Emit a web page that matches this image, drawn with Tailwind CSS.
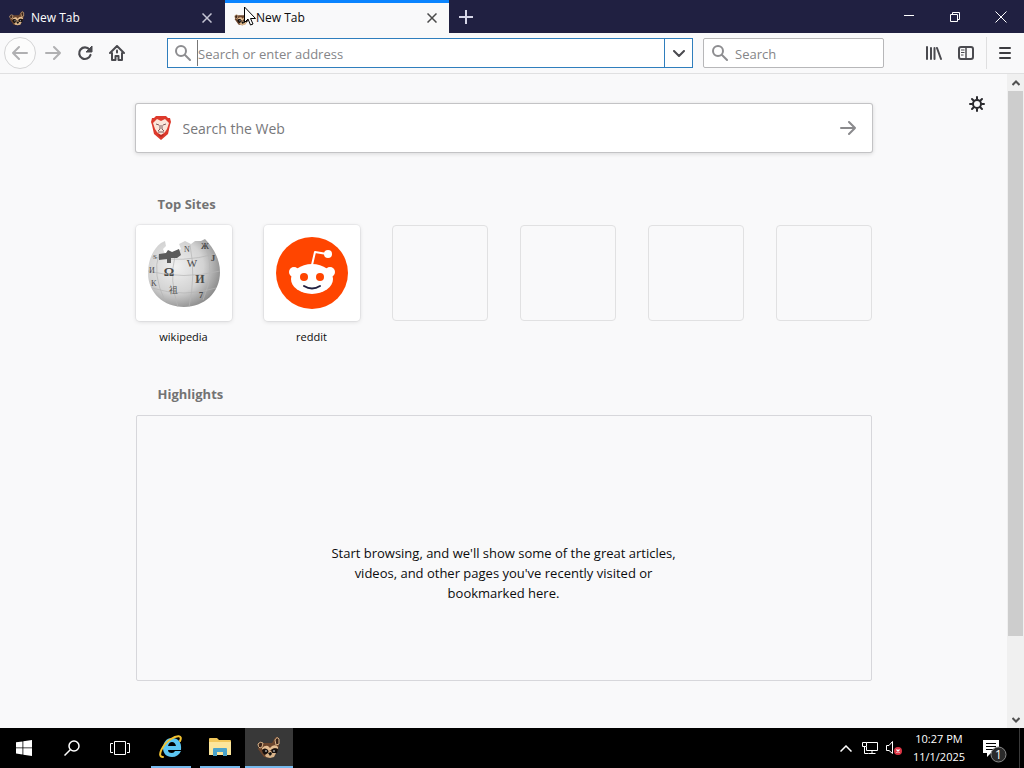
<!DOCTYPE html>
<html lang="en">
<head>
  <meta charset="UTF-8" />
  <meta name="viewport" content="width=device-width, initial-scale=1.0" />
  <title>New Tab</title>
  <script src="https://cdn.jsdelivr.net/npm/@tailwindcss/browser@4"></script>
</head>
<body class="flex min-h-screen flex-col bg-[#f9f9fa] font-['Open_Sans','Noto_Sans',sans-serif] text-xs text-[#0c0c0d]">

  <!-- Shared raccoon icon -->
  <svg class="hidden" aria-hidden="true">
    <symbol id="raccoon" viewBox="0 0 24 24">
      <path d="M3 10q1-2 4-2l8 0 3-5q3-3 4 1l0 6-1 5-3 5-5 3-6-1-3-4-3-4z" fill="#6b452d" />
      <path d="M1 9q2-3 5-1l-1 4-2 1q-2-1-2-4z" fill="#3a241a" stroke="#d9b48a" />
      <path d="M18 5q2-4 4-1v5l-3 1z" fill="#3a241a" stroke="#d9b48a" />
      <path d="M5 13q3-3 6-2l2 2 2-2q4-2 6 1v2q-4-2-7 1l-2 1-3-2q-2-1-4 1z" fill="#e3bd92" />
      <path d="M5 15q3-3 6 0l0 3-3 2q-3-2-3-5zM14 15q3-3 7-1l-1 4-4 1z" fill="#17110f" />
      <path d="M8 20l3-2 1-2h2l1 2 4 0-2 4-4 1-4-1z" fill="#d9b48a" />
      <path d="M11 18l3-1 1 2-2 2z" fill="#111" />
      <circle cx="9" cy="16" r="0.800" fill="#fff" />
      <circle cx="17" cy="16" r="0.800" fill="#fff" />
    </symbol>
  </svg>

  <!-- Tab strip -->
  <header class="relative flex h-[33px] bg-[#202041] text-white">
    <div class="flex w-[225px] items-center gap-[6px] pt-[2px] pr-3 pl-[9px]">
      <svg class="h-4 w-4"><use href="#raccoon" /></svg>
      <span class="flex-1">New Tab</span>
      <button class="grid h-4 w-3 place-items-center" aria-label="Close tab">
        <svg class="h-[10px] w-[10px]" viewBox="0 0 10 10" stroke="#c4c4d4" stroke-width="1.5"><path d="M0.5 0.5l9 9M9.5 0.5l-9 9" /></svg>
      </button>
    </div>
    <div class="flex w-[224px] items-center gap-[6px] border-t-3 border-[#0a84ff] bg-[#f9f9fa] pr-[11px] pl-[9px] text-[#0c0c0d]">
      <svg class="h-4 w-4"><use href="#raccoon" /></svg>
      <span class="flex-1">New Tab</span>
      <button class="grid h-4 w-3 place-items-center" aria-label="Close tab">
        <svg class="h-[10px] w-[10px]" viewBox="0 0 10 10" stroke="#4a4a4a" stroke-width="1.5"><path d="M0.5 0.5l9 9M9.5 0.5l-9 9" /></svg>
      </button>
    </div>
    <button class="grid w-[34px] place-items-center" aria-label="New tab">
      <svg class="h-[14px] w-[14px]" viewBox="0 0 14 14" stroke="#d5d5e6" stroke-width="2"><path d="M7 0v14M0 7h14" /></svg>
    </button>
    <div class="ml-auto flex">
      <button class="grid w-[46px] place-items-center" aria-label="Minimize">
        <svg class="h-[10px] w-[10px]" viewBox="0 0 10 10" stroke="#fff"><path d="M0 3.5h10" /></svg>
      </button>
      <button class="grid w-[46px] place-items-center" aria-label="Restore">
        <svg class="h-[10px] w-[10px]" viewBox="0 0 10 10" fill="none" stroke="#fff"><path d="M0.5 2.5h7v7h-7zM2.5 2.5v-2h7v7h-2" /></svg>
      </button>
      <button class="grid w-[46px] place-items-center" aria-label="Close window">
        <svg class="h-3 w-3" viewBox="0 0 12 12" stroke="#fff"><path d="M0.5 0.5l11 11M11.5 0.5l-11 11" /></svg>
      </button>
    </div>
    <!-- Mouse pointer -->
    <svg class="absolute top-[6px] left-[244px] z-10 h-5 w-3" viewBox="0 0 12 20" fill="#fff" stroke="#000"><path d="M0.5 1v15.500l3.500-3.500 2.500 6 2.500-1-2.500-5.500h5z" /></svg>
  </header>

  <!-- Navigation toolbar -->
  <nav class="flex h-[41px] items-center border-b border-[#e0e0e1] bg-[#f9f9fa] pl-1 text-[#4a4a4f]">
    <button class="grid h-8 w-8 place-items-center rounded-full border border-[#d4d4d5] bg-[#fcfcfc]" aria-label="Back">
      <svg class="h-4 w-4" viewBox="0 0 16 16" fill="none" stroke="#b0b0b2" stroke-width="2" stroke-linecap="round" stroke-linejoin="round"><path d="M15 8H1M7 2L1 8l6 6" /></svg>
    </button>
    <button class="grid h-8 w-[33px] place-items-center" aria-label="Forward">
      <svg class="h-4 w-4" viewBox="0 0 16 16" fill="none" stroke="#b0b0b2" stroke-width="2" stroke-linecap="round" stroke-linejoin="round"><path d="M1 8h14M9 2l6 6-6 6" /></svg>
    </button>
    <button class="grid h-8 w-8 place-items-center" aria-label="Reload">
      <svg class="h-4 w-4" viewBox="0 0 16 16"><path d="M12.500 4.500A5.800 5.800 0 1 0 13.500 10" fill="none" stroke="#4a4a4f" stroke-width="2.200" stroke-linecap="round" /><path d="M15 1v6H9z" fill="#4a4a4f" stroke="#4a4a4f" stroke-linejoin="round" /></svg>
    </button>
    <button class="grid h-8 w-8 place-items-center" aria-label="Home">
      <svg class="h-4 w-4" viewBox="0 0 16 16" fill="none" stroke="#4a4a4f" stroke-width="2" stroke-linecap="round" stroke-linejoin="round"><path d="M1 8l7-7 7 7M3 8v7h3.500v-4h3v4H13V8" /><path d="M8 5.500v2" /></svg>
    </button>
    <div class="ml-[34px] flex h-[30px] flex-1 items-center border border-[#2f7ebd] bg-white">
      <label for="address" class="grid w-[29px] place-items-center" aria-label="Address">
        <svg class="h-4 w-4" viewBox="0 0 16 16" fill="none" stroke="#8d8d90" stroke-width="2" stroke-linecap="round"><circle cx="6" cy="6" r="5" /><path d="M10 10l5 5" /></svg>
      </label>
      <input id="address" type="text" placeholder="Search or enter address" class="h-[26px] min-w-0 flex-1 border-l border-[#777] pt-[2px] text-[13px] outline-none placeholder:text-[#858588]" />
      <button class="grid h-full w-7 place-items-center border-l border-[#2f7ebd]" aria-label="Show history">
        <svg class="h-[7px] w-3" viewBox="0 0 12 7" fill="none" stroke="#4a4a4f" stroke-width="2" stroke-linecap="round" stroke-linejoin="round"><path d="M1 1l5 5 5-5" /></svg>
      </button>
    </div>
    <div class="ml-[10px] flex h-[30px] w-[181px] items-center rounded-xs border border-[#b7b7b9] bg-white">
      <label for="search" class="grid w-[31px] place-items-center" aria-label="Search">
        <svg class="h-4 w-4" viewBox="0 0 16 16" fill="none" stroke="#8d8d90" stroke-width="2" stroke-linecap="round"><circle cx="6" cy="6" r="5" /><path d="M10 10l5 5" /></svg>
      </label>
      <input id="search" type="text" placeholder="Search" class="h-[26px] min-w-0 flex-1 pt-[2px] text-[13px] outline-none placeholder:text-[#858588]" />
    </div>
    <button class="ml-[34px] grid h-8 w-8 place-items-center" aria-label="Library">
      <svg class="h-4 w-4" viewBox="0 0 16 16" fill="none" stroke="#4a4a4f" stroke-width="2" stroke-linecap="round"><path d="M1 2v12M5 3v11M8.500 3v11M11 3l4 11" /></svg>
    </button>
    <button class="grid h-8 w-8 place-items-center" aria-label="Sidebars">
      <svg class="h-4 w-4" viewBox="0 0 16 16" fill="none" stroke="#4a4a4f" stroke-width="2"><rect x="1" y="2" width="14" height="12" rx="2" /><path d="M8 2v12" stroke-width="1.500" /><path d="M3 5h3.500M3 7.500h3.500M3 10h2.500" stroke-width="1" /></svg>
    </button>
    <div class="ml-1 h-8 border-l border-[#dfdfe0]"></div>
    <button class="mr-px grid h-8 w-9 place-items-center" aria-label="Open menu">
      <svg class="h-3 w-3" viewBox="0 0 12 12" stroke="#3c3c40" stroke-width="2" stroke-linecap="round"><path d="M1 1h10M1 6h10M1 11h10" /></svg>
    </button>
  </nav>

  <!-- New tab page -->
  <div class="flex flex-1">
    <main class="relative flex-1 pt-[30px] pb-10">
      <button class="absolute top-[22px] right-[22px]" aria-label="Customize your new tab page">
        <svg class="h-4 w-4" viewBox="0 0 16 16" fill="none" stroke="#2a2a2e" stroke-width="2" stroke-linecap="round"><circle cx="8" cy="8" r="4" /><path d="M8 1v2M8 13v2M1 8h2M13 8h2M3 3l1.500 1.500M11.500 11.500L13 13M13 3l-1.500 1.500M4.500 11.500L3 13" /></svg>
      </button>

      <div class="mx-auto max-w-[736px]">
        <form class="flex h-12 items-center rounded-xs bg-white pr-4 pl-[14px] shadow-[0_0_0_1px_#c3c3c5,0_1px_4px_1px_#0c0c0d22]">
          <svg class="h-6 w-[22px]" viewBox="0 0 22 24">
            <path d="M6 0h10l2 2h2l1 4-1 3-2 9-7 6-7-6-2-9-1-3 1-4h2z" fill="#dd3a2c" />
            <path d="M11 5l4-2 4 4-2 6-2 3-1 1-3 2-3-2-1-1-2-3-2-6 4-4z" fill="#fbe6da" />
            <path d="M6 8l3 1M16 8l-3 1M10 9v4l-2 2M12 9v4l2 2M8 16h6" fill="none" stroke="#7b5a5c" stroke-width="1" />
            <path d="M8 18l3 1 3-1-1 2-2 1-2-1z" fill="#b92a22" />
          </svg>
          <input type="search" aria-label="Search the Web" placeholder="Search the Web" class="ml-[11px] h-full min-w-0 flex-1 text-sm outline-none placeholder:text-[#77777a]" />
          <button class="grid h-8 w-4 place-items-center" aria-label="Search">
            <svg class="h-4 w-4" viewBox="0 0 16 16" fill="none" stroke="#8a8a8d" stroke-width="2" stroke-linecap="round" stroke-linejoin="round"><path d="M1 8h14M9 2l6 6-6 6" /></svg>
          </button>
        </form>

        <h2 class="mt-[42px] pl-[22px] text-[13px] leading-5 font-bold text-[#737373]">Top Sites</h2>
        <ul class="mt-[11px] grid grid-cols-6 gap-8 text-center text-[11px]">
          <li>
            <a href="#" class="block">
              <span class="grid h-24 place-items-center rounded-sm bg-white shadow-[0_0_0_1px_#0c0c0d0a,0_1px_4px_#0c0c0d20]">
                <svg class="h-[72px] w-[74px]" viewBox="0 0 74 72" aria-hidden="true">
                  <defs>
                    <radialGradient id="globe" cx="38%" cy="40%" r="65%">
                      <stop offset="0" stop-color="#f1f1f1" />
                      <stop offset="0.6" stop-color="#d3d3d3" />
                      <stop offset="1" stop-color="#8d8d8d" />
                    </radialGradient>
                  </defs>
                  <path d="M14 6l4-2 1 5-3 3 2 5 10 0 6-5-2-5 6-3 6 3 4-3 6 0 4-2C66 10 73 22 73 35 73 56 57 70 37 70S1 56 1 36C1 23 6 12 14 6z" fill="url(#globe)" />
                  <path d="M5 20q30 6 63-3M1 34q36 9 72 0M5 51q32 10 64 0M12 17q-7 20 6 47M28 19q-6 24 3 51M43 8q6 30-1 62M58 7q11 27-2 56" fill="none" stroke="#b5b5b5" stroke-width="0.7" />
                  <path d="M12 17l7-1 2-3 4 2 7-3 2 6-4 3-6 0v5h-4v-4l-8 1z" fill="#5a5a5a" />
                  <g fill="#4a4a4a" font-family="Liberation Serif, serif" text-anchor="middle">
                    <text x="22" y="39" font-size="13" font-weight="bold">Ω</text>
                    <text x="45" y="30" font-size="11">W</text>
                    <text x="53" y="46" font-size="12" font-weight="bold">И</text>
                    <text x="26" y="56" font-size="9">祖</text>
                    <text x="40" y="15" font-size="8">N</text>
                    <text x="58" y="12" font-size="8" font-weight="bold">Ж</text>
                    <text x="66" y="24" font-size="9" font-weight="bold">J</text>
                    <text x="54" y="61" font-size="9" font-weight="bold">7</text>
                    <text x="5" y="36" font-size="8">И</text>
                    <text x="7" y="49" font-size="8">K</text>
                    <text x="8" y="22" font-size="7">S</text>
                  </g>
                </svg>
              </span>
              <span class="mt-[6px] block leading-5">wikipedia</span>
            </a>
          </li>
          <li>
            <a href="#" class="block">
              <span class="grid h-24 place-items-center rounded-sm bg-white shadow-[0_0_0_1px_#0c0c0d0a,0_1px_4px_#0c0c0d20]">
                <svg class="h-[72px] w-[72px]" viewBox="0 0 72 72" aria-hidden="true">
                  <circle cx="36" cy="36" r="36" fill="#ff4500" />
                  <g fill="#fff">
                    <circle cx="18" cy="35" r="5" />
                    <circle cx="54" cy="35" r="5" />
                    <ellipse cx="36" cy="42" rx="21" ry="15" />
                    <circle cx="52" cy="17" r="4" />
                  </g>
                  <path d="M36 28l3-13 12 2" fill="none" stroke="#fff" stroke-width="2" stroke-linejoin="round" />
                  <circle cx="28" cy="40" r="4" fill="#ff4500" />
                  <circle cx="44" cy="40" r="4" fill="#ff4500" />
                  <path d="M28 49q8 5 16 0" fill="none" stroke="#202040" stroke-width="2" stroke-linecap="round" />
                </svg>
              </span>
              <span class="mt-[6px] block leading-5">reddit</span>
            </a>
          </li>
          <li><span class="block h-24 rounded-sm border border-[#e1e1e2]"></span></li>
          <li><span class="block h-24 rounded-sm border border-[#e1e1e2]"></span></li>
          <li><span class="block h-24 rounded-sm border border-[#e1e1e2]"></span></li>
          <li><span class="block h-24 rounded-sm border border-[#e1e1e2]"></span></li>
        </ul>

        <h2 class="mt-[37px] pl-[22px] text-[13px] leading-5 font-bold text-[#737373]">Highlights</h2>
        <section class="mt-[11px] rounded-xs border border-[#d7d7db] pt-[127px] pb-[77px]">
          <p class="mx-auto max-w-[352px] text-center text-[13px] leading-5">Start browsing, and we'll show some of the great articles, videos, and other pages you've recently visited or bookmarked here.</p>
        </section>
      </div>
    </main>

    <!-- Scrollbar -->
    <div class="flex w-[17px] flex-col bg-[#f0f0f0]">
      <div class="grid h-[17px] place-items-center">
        <svg class="h-[6px] w-2" viewBox="0 0 8 6" fill="none" stroke="#505050" stroke-width="2"><path d="M0.500 5L4 1.500 7.500 5" /></svg>
      </div>
      <div class="mr-px ml-px flex-[545] bg-[#cdcdcd]"></div>
      <div class="flex-[75]"></div>
      <div class="grid h-[17px] place-items-center">
        <svg class="h-[6px] w-2" viewBox="0 0 8 6" fill="none" stroke="#505050" stroke-width="2"><path d="M0.500 1L4 4.500 7.500 1" /></svg>
      </div>
    </div>
  </div>

  <!-- Taskbar -->
  <footer class="flex h-10 bg-black text-white">
    <button class="grid w-12 place-items-center" aria-label="Start">
      <svg class="h-4 w-4" viewBox="0 0 16 16" fill="#fff"><path d="M0 2.300L6.500 1.400v6.100H0zM7.300 1.300L16 0v7.500H7.300zM0 8.300h6.500v6.200L0 13.600zM7.300 8.300H16V16l-8.700-1.300z" /></svg>
    </button>
    <button class="grid w-12 place-items-center" aria-label="Search Windows">
      <svg class="h-4 w-4" viewBox="0 0 16 16" fill="none" stroke="#fff" stroke-width="1.500"><circle cx="10" cy="6" r="5" /><path d="M6.500 9.500L0.500 15.500" /></svg>
    </button>
    <button class="grid w-12 place-items-center" aria-label="Task View">
      <svg class="h-[14px] w-5" viewBox="0 0 20 14" fill="none" stroke="#fff"><path d="M4.500 0.500h11v13h-11zM3 2.500H0.500v9H3M17 2.500h2.500v9H17" /></svg>
    </button>
    <button class="ml-[7px] grid w-10 place-items-center border-b-2 border-[#76b9ed]" aria-label="Internet Explorer">
      <svg class="h-6 w-6" viewBox="0 0 24 24">
        <path d="M13 3C7 3 4 8 4 13s3 9 9 9c4 0 7-2 9-6h-6q-1 2-3 2-4 0-4-3h13C23 7 19 3 13 3zM9 11q1-4 4-4t4 4z" fill="#5cc6f2" fill-rule="evenodd" />
        <path d="M4 22C-3 22 4 9 12 4c6-4 12-4 9 2" fill="none" stroke="#f2c230" stroke-width="2" stroke-linecap="round" />
      </svg>
    </button>
    <button class="mr-[5px] ml-[9px] grid w-10 place-items-center border-b-2 border-[#76b9ed]" aria-label="File Explorer">
      <svg class="h-5 w-[22px]" viewBox="0 0 22 20">
        <path d="M0 2q0-1 1-1h7l2 2h11q1 0 1 1v14H0z" fill="#f1c75b" />
        <path d="M0 5h22v13H0z" fill="#fbe59b" />
        <path d="M4 19v-7q0-1 1-1h12q1 0 1 1v7h-4v-4H8v4z" fill="#4aa3cb" />
      </svg>
    </button>
    <button class="grid w-12 place-items-center border-b-2 border-[#76b9ed] bg-[#383838]" aria-label="New Tab">
      <svg class="h-6 w-6"><use href="#raccoon" /></svg>
    </button>

    <div class="ml-auto flex items-center">
      <button class="grid h-full w-6 place-items-center" aria-label="Show hidden icons">
        <svg class="h-[7px] w-3" viewBox="0 0 12 7" fill="none" stroke="#fff" stroke-width="1.500"><path d="M0.500 6.500L6 1l5.500 5.500" /></svg>
      </button>
      <button class="grid h-full w-6 place-items-center" aria-label="Network">
        <svg class="h-[14px] w-4" viewBox="0 0 16 14" fill="none" stroke="#fff"><path d="M4.500 3.500v-2h11v8h-11V6M10 9.500v3M6.500 12.500h7M2.500 6v6.500h4" /><path d="M0.500 1.500h4v4h-4z" fill="#000" /></svg>
      </button>
      <button class="grid h-full w-6 place-items-center" aria-label="Volume muted">
        <svg class="h-4 w-4" viewBox="0 0 16 16"><path d="M0.500 5.500H3l3.500-4v12L3 10.500H0.500z" fill="none" stroke="#fff" /><circle cx="12" cy="11" r="4" fill="#dc3545" /><path d="M10.500 9.500l3 3M13.500 9.500l-3 3" stroke="#fff" stroke-width="1.200" /></svg>
      </button>
      <div class="w-[66px] text-center text-[11px] leading-[18px]">
        <div>10:27 PM</div>
        <div>11/1/2025</div>
      </div>
      <button class="grid h-full w-[46px] place-items-center pt-[6px]" aria-label="1 new notification">
        <svg class="h-6 w-6" viewBox="0 0 24 24">
          <path d="M0 1h16v13H8l-4 4v-4H0z" fill="#fff" />
          <path d="M3 4.500h10M3 7.500h10M3 10.500h7" stroke="#000" />
          <circle cx="15.500" cy="15.500" r="7.500" fill="#2b2b2b" stroke="#8a8a8a" />
          <text x="15.500" y="20" font-size="12" fill="#fff" text-anchor="middle">1</text>
        </svg>
      </button>
      <div class="mr-[4px] ml-px h-full border-l border-[#3a3a3a]"></div>
    </div>
  </footer>
</body>
</html>
